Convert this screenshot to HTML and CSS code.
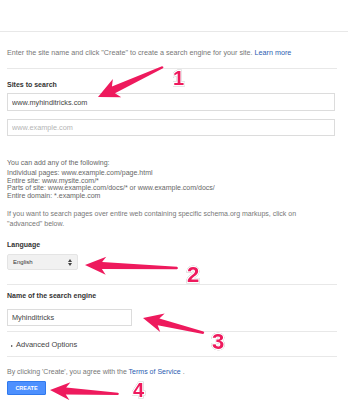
FILE: index.html
```html
<!DOCTYPE html>
<html lang="en">
<head>
    <meta charset="UTF-8">
    <meta name="viewport" content="width=device-width, initial-scale=1.0">
    <title>Create a custom search engine</title>
    <link rel="stylesheet" href="styles.css">
</head>
<body>
    <div class="page">
        <div class="topbar"></div>
        <main class="content">
            <!-- Intro -->
            <section class="intro">
                <p>Enter the site name and click "Create" to create a search engine for your site. <a href="#">Learn more</a></p>
            </section>

            <!-- Sites -->
            <section class="sites">
                <label class="field-label">Sites to search</label>
                <input type="text" class="text-input wide" value="www.myhinditricks.com">
                <input type="text" class="text-input wide second" placeholder="www.example.com">

                <p class="note-title">You can add any of the following:</p>
                <ul class="note-list">
                    <li>Individual pages: www.example.com/page.html</li>
                    <li>Entire site: www.mysite.com/*</li>
                    <li>Parts of site: www.example.com/docs/* or www.example.com/docs/</li>
                    <li>Entire domain: *.example.com</li>
                </ul>

                <p class="note-schema">If you want to search pages over entire web containing specific schema.org markups, click on "advanced" below.</p>

                <label class="field-label lang-label">Language</label>
                <div class="select">
                    <span>English</span>
                    <svg class="select-arrows" width="4" height="7" viewBox="0 0 4 7">
                        <path d="M0 3 L2 0 L4 3 Z M0 4 L2 7 L4 4 Z" fill="#444"/>
                    </svg>
                </div>
            </section>

            <!-- Name -->
            <section class="name">
                <label class="field-label">Name of the search engine</label>
                <input type="text" class="text-input short" value="Myhinditricks">
            </section>

            <!-- Advanced -->
            <section class="advanced">
                <span class="caret"></span>Advanced Options
            </section>

            <p class="terms">By clicking 'Create', you agree with the <a href="#">Terms of Service</a> .</p>
            <button class="create-btn">CREATE</button>
        </main>

        <!-- Annotation arrows -->
        <svg class="marks" width="348" height="400" viewBox="0 0 348 400">
            <g transform="translate(98 97) rotate(-24.8)">
                <path class="arrow" d="M0 0 L21 -10 L17 -3.6 L71 -1.2 Q73 0 71 1.2 L17 3.6 L21 10 Z"/>
            </g>
            <g transform="translate(85 265) rotate(1.85)">
                <path class="arrow" d="M0 0 L21 -9 L17 -3.5 L92 -1.3 Q94 0 92 1.3 L17 3.5 L21 9 Z"/>
            </g>
            <g transform="translate(143 318) rotate(13.8)">
                <path class="arrow" d="M0 0 L20 -9.5 L16 -3.5 L62 -1.2 Q64 0 62 1.2 L16 3.5 L20 9.5 Z"/>
            </g>
            <g transform="translate(50 390) rotate(3.3)">
                <path class="arrow" d="M0 0 L20 -9 L16 -3.5 L68 -1.2 Q70 0 68 1.2 L16 3.5 L20 9 Z"/>
            </g>
            <text class="num small" x="173" y="85">1</text>
            <text class="num" x="187" y="282">2</text>
            <text class="num" x="212" y="349">3</text>
            <text class="num tight" x="133" y="397">4</text>
        </svg>
    </div>
</body>
</html>
```

FILE: styles.css
```css
/* Reset default styles */
* {
    margin: 0;
    padding: 0;
    box-sizing: border-box;
}

body {
    font-family: "Liberation Sans", Arial, sans-serif;
    background-color: #fff;
    color: #666;
    font-size: 7px;
}

a {
    color: #2a5db0;
    text-decoration: none;
}

.page {
    position: relative;
    width: 348px;
    height: 400px;
    overflow: hidden;
}

.topbar {
    height: 32px;
    border-bottom: 1px solid #e8e8e8;
}

.content {
    padding: 0 11px 0 7px;
}

.intro {
    padding: 16px 0 10px;
    border-bottom: 1px solid #e8e8e8;
}

.intro p {
    line-height: 10px;
    font-size: 7.2px;
    color: #777;
}

.field-label {
    display: block;
    font-weight: bold;
    color: #333;
    line-height: 10px;
}

.sites .field-label {
    margin-top: 11px;
}

.text-input {
    display: block;
    height: 18px;
    padding: 0 4px;
    border: 1px solid #dcdcdc;
    font-family: "Liberation Sans", Arial, sans-serif;
    font-size: 7.3px;
    color: #444;
    outline: none;
}

.text-input::placeholder {
    color: #b5b5b5;
}

.wide {
    width: 328px;
    margin-top: 3px;
}

.wide.second {
    height: 17px;
    margin-top: 8px;
}

.short {
    width: 125px;
    height: 17px;
    margin-top: 8px;
}

.note-title {
    margin-top: 23px;
    line-height: 8px;
}

.note-list {
    list-style: none;
    margin-top: 2px;
}

.note-list li {
    line-height: 7.5px;
}

.note-schema {
    margin-top: 10px;
    line-height: 10px;
    color: #777;
    padding-right: 30px;
}

.lang-label {
    margin-top: 10px;
}

.select {
    display: flex;
    align-items: center;
    justify-content: space-between;
    width: 71px;
    height: 16px;
    margin-top: 4px;
    padding: 0 5px;
    background-color: #f1f1f1;
    border: 1px solid #e4e4e4;
    border-radius: 2px;
    font-size: 6px;
    color: #333;
}

.sites {
    padding-bottom: 14px;
    border-bottom: 1px solid #e8e8e8;
}

.name {
    padding-top: 6px;
    padding-bottom: 5px;
    border-bottom: 1px solid #e8e8e8;
}

.advanced {
    display: flex;
    align-items: center;
    padding: 8px 0 6px;
    line-height: 10px;
    font-size: 7.5px;
    color: #444;
    border-bottom: 1px solid #e8e8e8;
}

.caret {
    width: 0;
    height: 0;
    margin: 1px 3px 0 4px;
    border-top: 1.5px solid transparent;
    border-bottom: 1.5px solid transparent;
    border-left: 2px solid #444;
}

.terms {
    margin-top: 10px;
    line-height: 10px;
    color: #777;
}

.create-btn {
    display: block;
    width: 39px;
    height: 14px;
    margin-top: 4px;
    background-color: #4d90fe;
    border: 1px solid #3079ed;
    border-radius: 1px;
    color: #fff;
    font-family: "Liberation Sans", Arial, sans-serif;
    font-size: 5.5px;
    font-weight: bold;
}

/* Annotations */
.marks {
    position: absolute;
    top: 0;
    left: 0;
    pointer-events: none;
}

.arrow {
    fill: #ee1a5d;
}

.num {
    font-family: "Liberation Sans", Arial, sans-serif;
    font-weight: bold;
    font-size: 22px;
    fill: #ee1a5d;
    stroke: #fff;
    stroke-width: 2.5px;
    paint-order: stroke;
    filter: drop-shadow(0.6px 0.8px 0.4px rgba(0, 0, 0, 0.45));
}

.num.small {
    font-size: 20px;
}

.num.tight {
    font-size: 20px;
}
```
